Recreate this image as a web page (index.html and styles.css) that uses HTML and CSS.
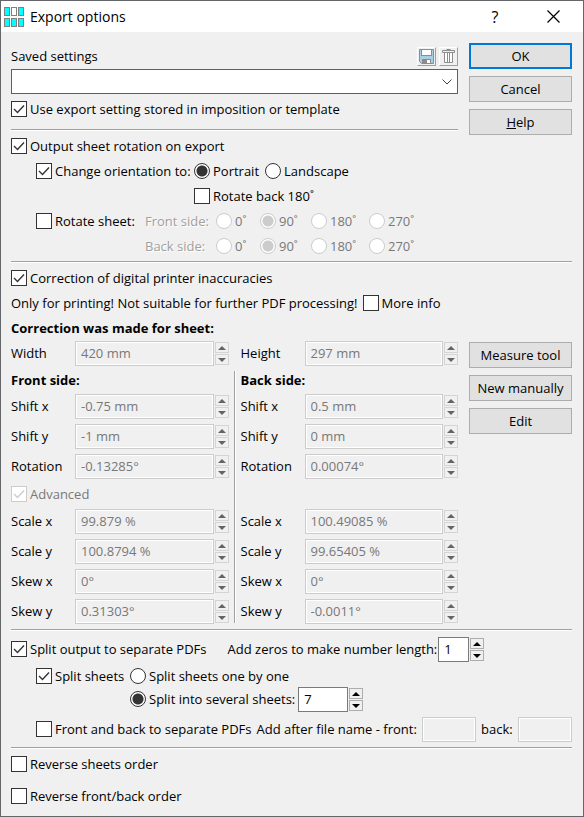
FILE: index.html
```html
<!DOCTYPE html>
<html lang="en">
<head>
	<title>Export options</title>
	<meta charset="utf-8">
	<meta name="viewport" content="width=device-width, initial-scale=1">
	<link rel="stylesheet" href="styles.css">
</head>
<body>
<div class="dialog">
	<header class="titlebar">
		<svg class="logo" width="21" height="20" viewBox="0 0 21 20">
			<g fill="#00ffff" stroke="#808080">
				<rect x="0.5" y="0.5" width="5" height="8"/>
				<rect x="7.5" y="0.5" width="5" height="8" fill="#fff"/>
				<rect x="14.5" y="0.5" width="5" height="8"/>
				<rect x="0.5" y="11.5" width="5" height="8"/>
				<rect x="7.5" y="11.5" width="5" height="8"/>
				<rect x="14.5" y="11.5" width="5" height="8"/>
			</g>
		</svg>
		<h1>Export options</h1>
		<button class="winbtn" aria-label="Context help">?</button>
		<button class="winbtn" aria-label="Close">
			<svg width="13" height="13" viewBox="0 0 13 13"><path d="M0.5 0.5L12.5 12.5M12.5 0.5L0.5 12.5" stroke="#000" stroke-width="1.2"/></svg>
		</button>
	</header>

	<form class="content">
		<div class="columns">
			<div class="main settings">
				<div class="row">
					<label class="grow" for="saved">Saved settings</label>
					<button type="button" class="tool" aria-label="Save setting">
						<svg width="15" height="15" viewBox="0 0 15 15">
							<path d="M0.5 0.5H14.5V14.5H2.5L0.5 12.5Z" fill="#a9cfe4" stroke="#8c8c8c"/>
							<rect x="2.5" y="0.5" width="10" height="6" fill="#fff" stroke="#8c8c8c"/>
							<rect x="3" y="10" width="9" height="4" fill="#8c8c8c"/>
							<rect x="8" y="11" width="3" height="3" fill="#fff"/>
						</svg>
					</button>
					<button type="button" class="tool" aria-label="Delete setting">
						<svg width="15" height="15" viewBox="0 0 15 15">
							<path d="M3.5 4V14H11.5V4" fill="#fff"/>
							<path d="M5.5 0.5H9.5M1.5 1.5H13.5V3.5H1.5ZM3.5 4V13.5H11.5V4M6.5 4V13M8.5 4V13" fill="none" stroke="#8c8c8c"/>
						</svg>
					</button>
				</div>
				<select class="combo" id="saved"><option></option></select>
				<div class="row stored">
					<label><input type="checkbox" checked>Use export setting stored in imposition or template</label>
				</div>
				<hr class="short">
				<div class="row">
					<label><input type="checkbox" checked>Output sheet rotation on export</label>
				</div>
				<div class="rotation">
					<label><input type="checkbox" checked>Change orientation to:</label>
					<div class="row choices">
						<label><input type="radio" name="orient" checked>Portrait</label>
						<label><input type="radio" name="orient">Landscape</label>
					</div>
					<label class="second"><input type="checkbox">Rotate back 180˚</label>
				</div>
				<div class="sheet">
					<label><input type="checkbox">Rotate sheet:</label>
					<span class="off">Front side:</span>
					<label><input type="radio" name="front" disabled>0˚</label>
					<label><input type="radio" name="front" checked disabled>90˚</label>
					<label><input type="radio" name="front" disabled>180˚</label>
					<label><input type="radio" name="front" disabled>270˚</label>
					<span class="off second">Back side:</span>
					<label><input type="radio" name="back" disabled>0˚</label>
					<label><input type="radio" name="back" checked disabled>90˚</label>
					<label><input type="radio" name="back" disabled>180˚</label>
					<label><input type="radio" name="back" disabled>270˚</label>
				</div>
			</div>
			<div class="side">
				<button type="submit" class="btn default">OK</button>
				<button type="button" class="btn">Cancel</button>
				<button type="button" class="btn"><u>H</u>elp</button>
			</div>
		</div>

		<hr>

		<div class="columns">
			<div class="main">
				<div class="row">
					<label><input type="checkbox" checked>Correction of digital printer inaccuracies</label>
				</div>
				<div class="row info">
					<span>Only for printing! Not suitable for further PDF processing!</span>
					<label><input type="checkbox">More info</label>
				</div>
				<h2 class="row">Correction was made for sheet:</h2>
				<div class="pair">
					<div class="field">
						<label for="width">Width</label>
						<div class="spin"><input type="text" id="width" value="420 mm" disabled><button type="button" class="up" aria-label="Up" disabled></button><button type="button" class="down" aria-label="Down" disabled></button></div>
					</div>
					<div></div>
					<div class="field">
						<label for="height">Height</label>
						<div class="spin"><input type="text" id="height" value="297 mm" disabled><button type="button" class="up" aria-label="Up" disabled></button><button type="button" class="down" aria-label="Down" disabled></button></div>
					</div>
				</div>
				<div class="pair">
					<div class="fields">
						<h2>Front side:</h2>
						<div class="field">
							<label for="fsx">Shift x</label>
							<div class="spin"><input type="text" id="fsx" value="-0.75 mm" disabled><button type="button" class="up" aria-label="Up" disabled></button><button type="button" class="down" aria-label="Down" disabled></button></div>
						</div>
						<div class="field">
							<label for="fsy">Shift y</label>
							<div class="spin"><input type="text" id="fsy" value="-1 mm" disabled><button type="button" class="up" aria-label="Up" disabled></button><button type="button" class="down" aria-label="Down" disabled></button></div>
						</div>
						<div class="field">
							<label for="frot">Rotation</label>
							<div class="spin"><input type="text" id="frot" value="-0.13285°" disabled><button type="button" class="up" aria-label="Up" disabled></button><button type="button" class="down" aria-label="Down" disabled></button></div>
						</div>
						<div class="advanced">
							<label><input type="checkbox" checked disabled>Advanced</label>
						</div>
						<div class="field">
							<label for="fcx">Scale x</label>
							<div class="spin"><input type="text" id="fcx" value="99.879 %" disabled><button type="button" class="up" aria-label="Up" disabled></button><button type="button" class="down" aria-label="Down" disabled></button></div>
						</div>
						<div class="field">
							<label for="fcy">Scale y</label>
							<div class="spin"><input type="text" id="fcy" value="100.8794 %" disabled><button type="button" class="up" aria-label="Up" disabled></button><button type="button" class="down" aria-label="Down" disabled></button></div>
						</div>
						<div class="field">
							<label for="fkx">Skew x</label>
							<div class="spin"><input type="text" id="fkx" value="0°" disabled><button type="button" class="up" aria-label="Up" disabled></button><button type="button" class="down" aria-label="Down" disabled></button></div>
						</div>
						<div class="field">
							<label for="fky">Skew y</label>
							<div class="spin"><input type="text" id="fky" value="0.31303°" disabled><button type="button" class="up" aria-label="Up" disabled></button><button type="button" class="down" aria-label="Down" disabled></button></div>
						</div>
					</div>
					<div class="divider"></div>
					<div class="fields">
						<h2>Back side:</h2>
						<div class="field">
							<label for="bsx">Shift x</label>
							<div class="spin"><input type="text" id="bsx" value="0.5 mm" disabled><button type="button" class="up" aria-label="Up" disabled></button><button type="button" class="down" aria-label="Down" disabled></button></div>
						</div>
						<div class="field">
							<label for="bsy">Shift y</label>
							<div class="spin"><input type="text" id="bsy" value="0 mm" disabled><button type="button" class="up" aria-label="Up" disabled></button><button type="button" class="down" aria-label="Down" disabled></button></div>
						</div>
						<div class="field">
							<label for="brot">Rotation</label>
							<div class="spin"><input type="text" id="brot" value="0.00074°" disabled><button type="button" class="up" aria-label="Up" disabled></button><button type="button" class="down" aria-label="Down" disabled></button></div>
						</div>
						<div class="advanced"></div>
						<div class="field">
							<label for="bcx">Scale x</label>
							<div class="spin"><input type="text" id="bcx" value="100.49085 %" disabled><button type="button" class="up" aria-label="Up" disabled></button><button type="button" class="down" aria-label="Down" disabled></button></div>
						</div>
						<div class="field">
							<label for="bcy">Scale y</label>
							<div class="spin"><input type="text" id="bcy" value="99.65405 %" disabled><button type="button" class="up" aria-label="Up" disabled></button><button type="button" class="down" aria-label="Down" disabled></button></div>
						</div>
						<div class="field">
							<label for="bkx">Skew x</label>
							<div class="spin"><input type="text" id="bkx" value="0°" disabled><button type="button" class="up" aria-label="Up" disabled></button><button type="button" class="down" aria-label="Down" disabled></button></div>
						</div>
						<div class="field">
							<label for="bky">Skew y</label>
							<div class="spin"><input type="text" id="bky" value="-0.0011°" disabled><button type="button" class="up" aria-label="Up" disabled></button><button type="button" class="down" aria-label="Down" disabled></button></div>
						</div>
					</div>
				</div>
			</div>
			<div class="side measure">
				<button type="button" class="btn">Measure tool</button>
				<button type="button" class="btn">New manually</button>
				<button type="button" class="btn">Edit</button>
			</div>
		</div>

		<hr class="spaced">

		<div class="row split">
			<label class="splitlabel"><input type="checkbox" checked>Split output to separate PDFs</label>
			<label for="zeros">Add zeros to make number length:</label>
			<div class="spin zeros"><input type="text" id="zeros" value="1"><button type="button" class="up" aria-label="Up"></button><button type="button" class="down" aria-label="Down"></button></div>
		</div>
		<div class="sheets">
			<label><input type="checkbox" checked>Split sheets</label>
			<label><input type="radio" name="split">Split sheets one by one</label>
			<div class="row second">
				<label for="several"><input type="radio" name="split" id="several" checked>Split into several sheets:</label>
				<div class="spin count"><input type="text" aria-label="Number of sheets" value="7"><button type="button" class="up" aria-label="Up"></button><button type="button" class="down" aria-label="Down"></button></div>
			</div>
		</div>
		<div class="row names">
			<label class="grow"><input type="checkbox">Front and back to separate PDFs</label>
			<label for="nfront">Add after file name - front:</label>
			<input type="text" id="nfront" disabled>
			<label for="nback">back:</label>
			<input type="text" id="nback" disabled>
		</div>

		<hr>

		<div class="row order">
			<label><input type="checkbox">Reverse sheets order</label>
		</div>
		<div class="row order">
			<label><input type="checkbox">Reverse front/back order</label>
		</div>
	</form>
</div>
</body>
</html>
```

FILE: styles.css
```css
*{
	box-sizing: border-box;
}
body{
	margin: 0;
	background: #f0f0f0;
	color: #000;
	font-family: "Open Sans", "Noto Sans", sans-serif;
	font-size: 13px;
	line-height: 18px;
}
input, button, select{
	margin: 0;
	font: inherit;
	color: inherit;
}
.dialog{
	min-height: 100vh;
	border: 1px solid #646669;
}

/* title bar */
.titlebar{
	display: flex;
	align-items: center;
	height: 31px;
	padding: 0 1px 0 3px;
	background: #fff;
}
h1{
	flex: 1;
	margin: 0 0 0 5px;
	font-size: 14px;
	font-weight: normal;
}
.winbtn{
	width: 58px;
	height: 31px;
	padding: 0;
	border: 0;
	background: none;
	font-size: 16px;
}
.winbtn svg{
	display: block;
	margin: 0 auto;
}

/* layout */
.content{
	padding: 11px 11px 7px 10px;
}
.columns{
	display: grid;
	grid-template-columns: minmax(0, 1fr) 103px;
	column-gap: 11px;
}
.settings{
	padding-top: 1px;
}
.side{
	display: flex;
	flex-direction: column;
	gap: 7px;
}
.measure{
	padding-top: 76px;
}
.row{
	display: flex;
	align-items: center;
	height: 25px;
}
.grow{
	flex: 1;
}
label, .off, .info span, h2.row{
	padding-bottom: 1px;
}
label{
	display: flex;
	align-items: center;
	gap: 3px;
	white-space: nowrap;
}
label:has(input:disabled){
	color: #787878;
}
h2{
	margin: 0;
	font-size: 13px;
	font-weight: bold;
}
hr{
	height: 2px;
	margin: 2px 0 3px;
	border: 0;
	border-top: 1px solid #a0a0a0;
	background: #fff;
}
hr.short{
	margin-top: 7px;
}
hr.spaced{
	margin: 5px 0 6px;
}
.stored{
	margin-top: 3px;
}

/* check boxes and radios */
input[type=checkbox], input[type=radio]{
	appearance: none;
	flex: none;
	width: 16px;
	height: 16px;
	border: 1px solid #333;
	background: #fff center no-repeat;
}
input[type=radio]{
	border-radius: 50%;
}
input[type=checkbox]:checked{
	background-image: url("data:image/svg+xml,%3Csvg xmlns='http://www.w3.org/2000/svg' width='12' height='10'%3E%3Cpath d='M1 5L4.500 8.500L11 1.500' fill='none' stroke='%23333' stroke-width='1.400'/%3E%3C/svg%3E");
}
input[type=radio]:checked{
	background-image: radial-gradient(circle, #333 5px, transparent 6px);
}
input[type=checkbox]:disabled, input[type=radio]:disabled{
	border-color: #ccc;
}
input[type=checkbox]:checked:disabled{
	background-image: url("data:image/svg+xml,%3Csvg xmlns='http://www.w3.org/2000/svg' width='12' height='10'%3E%3Cpath d='M1 5L4.500 8.500L11 1.500' fill='none' stroke='%23ccc' stroke-width='1.400'/%3E%3C/svg%3E");
}
input[type=radio]:checked:disabled{
	background-image: radial-gradient(circle, #ccc 5px, transparent 6px);
}

/* text boxes */
input[type=text]{
	min-width: 0;
	height: 25px;
	padding: 0 5px 1px;
	border: 1px solid #7a7a7a;
	background: #fff;
}
input[type=text]:disabled{
	border-color: #ccc;
	background: #f0f0f0;
	box-shadow: inset 0 0 0 1px #fff;
	color: #787878;
}
.combo{
	appearance: none;
	display: block;
	width: 100%;
	height: 25px;
	border: 1px solid #0078d7;
	border-radius: 0;
	outline: 0;
	background: #fff url("data:image/svg+xml,%3Csvg xmlns='http://www.w3.org/2000/svg' width='10' height='6'%3E%3Cpath d='M0.500 0.500L5 5L9.500 0.500' fill='none' stroke='%23444'/%3E%3C/svg%3E") right 5px center no-repeat;
}
.spin{
	display: grid;
	grid-template-columns: minmax(0, 1fr) 14px;
	grid-template-rows: 11px 11px;
	gap: 1px;
	align-content: center;
	height: 25px;
}
.spin input{
	grid-row: 1 / 3;
	align-self: center;
	width: 100%;
}
.up, .down{
	padding: 0;
	border: 1px solid #adadad;
	background: #f0f0f0 center no-repeat;
	background-image: url("data:image/svg+xml,%3Csvg xmlns='http://www.w3.org/2000/svg' width='8' height='4'%3E%3Cpath d='M0 4L4 0L8 4Z'/%3E%3C/svg%3E");
}
.down{
	background-image: url("data:image/svg+xml,%3Csvg xmlns='http://www.w3.org/2000/svg' width='8' height='4'%3E%3Cpath d='M0 0L4 4L8 0Z'/%3E%3C/svg%3E");
}
.up:disabled, .down:disabled{
	border-color: #d4d4d4;
	background-image: url("data:image/svg+xml,%3Csvg xmlns='http://www.w3.org/2000/svg' width='8' height='4'%3E%3Cpath d='M0 4L4 0L8 4Z' fill='%23646464'/%3E%3C/svg%3E");
}
.down:disabled{
	background-image: url("data:image/svg+xml,%3Csvg xmlns='http://www.w3.org/2000/svg' width='8' height='4'%3E%3Cpath d='M0 0L4 4L8 0Z' fill='%23646464'/%3E%3C/svg%3E");
}

/* buttons */
.btn{
	height: 26px;
	padding: 0;
	border: 1px solid #adadad;
	background: #e1e1e1;
}
.default{
	border: 2px solid #0078d7;
}
.tool{
	display: flex;
	align-items: center;
	justify-content: center;
	width: 19px;
	height: 19px;
	margin-left: 3px;
	padding: 0;
	border: 1px solid;
	border-color: #fff #a0a0a0 #a0a0a0 #fff;
	background: #f0f0f0;
}

/* sheet rotation */
.rotation, .sheet{
	display: grid;
	grid-auto-rows: 25px;
	align-items: center;
	justify-content: start;
	padding-left: 25px;
}
.rotation{
	grid-template-columns: 158px auto;
}
.second{
	grid-column-start: 2;
}
.choices{
	gap: 6px;
}
.sheet{
	grid-template-columns: 109px 71px 44px 51px 58px auto;
}
.off{
	color: #a0a0a0;
	text-shadow: 1px 1px #fff;
}

/* printer correction */
.info{
	gap: 5px;
}
.pair{
	display: grid;
	grid-template-columns: minmax(0, 1fr) 2px minmax(0, 1fr);
	column-gap: 5px;
}
.divider{
	margin: 5px 0 1px;
	border-left: 1px solid #a0a0a0;
	border-right: 1px solid #fff;
}
.field{
	display: grid;
	grid-template-columns: 64px minmax(0, 1fr);
	align-items: center;
}
.fields h2{
	height: 28px;
	line-height: 28px;
}
.field + .field{
	margin-top: 5px;
}
.advanced{
	display: flex;
	align-items: center;
	height: 30px;
}

/* splitting */
.splitlabel{
	margin-right: 21px;
}
.zeros{
	width: 46px;
	margin-left: 1px;
}
.sheets{
	display: grid;
	grid-template-columns: 94px auto;
	grid-template-rows: 22px 25px;
	align-items: center;
	justify-content: start;
	margin-top: 3px;
	padding-left: 25px;
}
.count{
	width: 65px;
	margin-left: 3px;
}
.names{
	gap: 5px;
	margin: 5px 0;
	padding-left: 25px;
}
.names input[type=text]{
	width: 56px;
}
.names + hr{
	margin-top: 0;
}
.order + .order{
	margin-top: 7px;
}
```
